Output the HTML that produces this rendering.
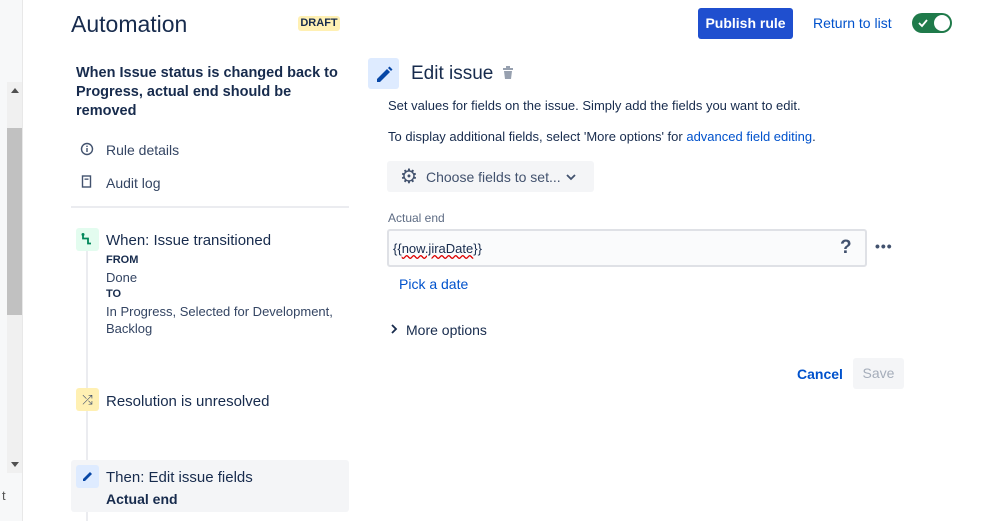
<!DOCTYPE html>
<html><head><meta charset="utf-8"><style>
*{margin:0;padding:0;box-sizing:border-box}
body{width:999px;height:521px;overflow:hidden;background:#fff;font-family:"Liberation Sans",sans-serif;color:#172b4d;position:relative}
.a{position:absolute;white-space:nowrap}
</style></head><body>
<div class="a" style="left:0;top:0;width:23px;height:521px;background:#f7f8f9;border-right:1px solid #e8e8e8"></div>
<div class="a" style="left:7px;top:82px;width:15px;height:391px;background:#f0f0f0"></div>
<div class="a" style="left:7px;top:128px;width:15px;height:187px;background:#c1c1c1"></div>
<div class="a" style="left:11px;top:88px;width:0;height:0;border-left:4px solid transparent;border-right:4px solid transparent;border-bottom:5px solid #505050"></div>
<div class="a" style="left:11px;top:462px;width:0;height:0;border-left:4px solid transparent;border-right:4px solid transparent;border-top:5px solid #505050"></div>
<div class="a" style="left:2px;top:488px;font-size:13px;color:#555">t</div>

<div class="a" style="left:71px;top:11px;font-size:23px;color:#172b4d">Automation</div>
<div class="a" style="left:298px;top:16px;width:42px;height:15px;background:#fff0b3;border-radius:3px;font-size:11px;font-weight:bold;text-align:center;line-height:15px;color:#172b4d">DRAFT</div>
<div class="a" style="left:76px;top:64px;font-size:14.5px;font-weight:bold;line-height:19px">When Issue status is changed back to<br>Progress, actual end should be<br>removed</div>
<svg class="a" style="left:80px;top:142px" width="14" height="14"><circle cx="7" cy="7" r="5.5" fill="none" stroke="#42526e" stroke-width="1.4"/><rect x="6.3" y="6" width="1.4" height="4" fill="#42526e"/><rect x="6.3" y="3.6" width="1.4" height="1.4" fill="#42526e"/></svg>
<div class="a" style="left:106px;top:142px;font-size:14px;color:#344563">Rule details</div>
<svg class="a" style="left:81px;top:175px" width="12" height="14"><rect x="1.5" y="1" width="8" height="11" fill="none" stroke="#42526e" stroke-width="1.4"/><rect x="3.5" y="3.5" width="4" height="1.3" fill="#42526e"/></svg>
<div class="a" style="left:106px;top:175px;font-size:14px;color:#344563">Audit log</div>
<div class="a" style="left:71px;top:206px;width:278px;height:2px;background:#ebecf0"></div>
<div class="a" style="left:86px;top:248px;width:2px;height:273px;background:#ebecf0"></div>
<div class="a" style="left:76px;top:228px;width:23px;height:23px;background:#e3fcef;border-radius:3px"></div>
<svg class="a" style="left:80px;top:232px" width="14" height="14"><path d="M3 2v4.5h5v5h3" fill="none" stroke="#00875a" stroke-width="1.8"/><circle cx="3" cy="2.5" r="1.5" fill="#00875a"/></svg>
<div class="a" style="left:106px;top:232px;font-size:15px">When: Issue transitioned</div>
<div class="a" style="left:106px;top:254px;font-size:11px;font-weight:bold">FROM</div>
<div class="a" style="left:106px;top:270px;font-size:13px;color:#344563">Done</div>
<div class="a" style="left:106px;top:288px;font-size:11px;font-weight:bold">TO</div>
<div class="a" style="left:106px;top:303px;font-size:13px;color:#344563;line-height:17px;white-space:normal;width:240px">In Progress, Selected for Development, Backlog</div>
<div class="a" style="left:76px;top:388px;width:23px;height:23px;background:#fff0b3;border-radius:3px;text-align:center;font-size:13px;line-height:23px;color:#42526e">⤮</div>
<div class="a" style="left:106px;top:393px;font-size:15px">Resolution is unresolved</div>
<div class="a" style="left:71px;top:460px;width:278px;height:52px;background:#f4f5f7;border-radius:3px"></div>
<div class="a" style="left:76px;top:465px;width:23px;height:23px;background:#deebff;border-radius:3px"></div>
<svg class="a" style="left:80px;top:469px" width="14" height="14"><path d="M3 10l7-7 2 2-7 7H3z" fill="#0747a6"/></svg>
<div class="a" style="left:106px;top:469px;font-size:15px">Then: Edit issue fields</div>
<div class="a" style="left:106px;top:491px;font-size:14px;font-weight:bold">Actual end</div>

<div class="a" style="left:698px;top:8px;width:95px;height:31px;background:#1f4fcf;border-radius:3px;color:#fff;font-size:14px;font-weight:bold;text-align:center;line-height:31px">Publish rule</div>
<div class="a" style="left:813px;top:15px;font-size:14px;color:#0052cc">Return to list</div>
<div class="a" style="left:912px;top:13px;width:40px;height:20px;background:#1f7a4a;border-radius:10px"></div>
<div class="a" style="left:934px;top:15px;width:16px;height:16px;background:#fff;border-radius:50%"></div>
<svg class="a" style="left:917px;top:17px" width="12" height="12"><path d="M2 6l3 3 5-6" fill="none" stroke="#fff" stroke-width="1.8"/></svg>

<div class="a" style="left:368px;top:58px;width:31px;height:31px;background:#deebff;border-radius:3px"></div>
<svg class="a" style="left:374px;top:64px" width="20" height="20"><path d="M3 15l10-10 3 3-10 10H3z" fill="#0747a6"/><path d="M14 4l1.5-1.5 3 3L17 7z" fill="#0747a6"/></svg>
<div class="a" style="left:411px;top:63px;font-size:19px">Edit issue</div>
<svg class="a" style="left:502px;top:66px" width="12" height="14"><rect x="1" y="2" width="10" height="2" fill="#97a0af"/><rect x="4" y="0" width="4" height="2" fill="#97a0af"/><path d="M2 5h8l-1 8H3z" fill="#97a0af"/></svg>
<div class="a" style="left:388px;top:98px;font-size:13px;color:#172b4d">Set values for fields on the issue. Simply add the fields you want to edit.</div>
<div class="a" style="left:388px;top:129px;font-size:13px;color:#172b4d">To display additional fields, select 'More options' for <span style="color:#0052cc">advanced field editing</span>.</div>
<div class="a" style="left:387px;top:161px;width:207px;height:31px;background:#f4f5f7;border-radius:3px"></div>
<div class="a" style="left:400px;top:164px;font-size:20px;color:#42526e">⚙</div>
<div class="a" style="left:426px;top:169px;font-size:14px;color:#42526e">Choose fields to set...</div>
<svg class="a" style="left:566px;top:173px" width="10" height="8"><path d="M1 2l4 4 4-4" fill="none" stroke="#42526e" stroke-width="1.8"/></svg>
<div class="a" style="left:388px;top:211px;font-size:12px;color:#5e6c84">Actual end</div>
<div class="a" style="left:387px;top:229px;width:480px;height:38px;border:2px solid #dfe1e6;border-radius:3px;background:#fafbfc"></div>
<div class="a" style="left:393px;top:241px;font-size:13px;color:#172b4d">{{<span style="text-decoration:underline wavy #d00">now.jiraDate</span>}}</div>
<div class="a" style="left:840px;top:237px;font-size:19px;font-weight:bold;color:#42526e">?</div>
<div class="a" style="left:875px;top:238px;font-size:14px;font-weight:bold;color:#42526e;letter-spacing:1px">•••</div>
<div class="a" style="left:399px;top:276px;font-size:14px;color:#0052cc">Pick a date</div>
<svg class="a" style="left:390px;top:324px" width="8" height="10"><path d="M2 1l4 4-4 4" fill="none" stroke="#172b4d" stroke-width="1.8"/></svg>
<div class="a" style="left:406px;top:322px;font-size:14px;color:#172b4d">More options</div>
<div class="a" style="left:797px;top:366px;font-size:14px;font-weight:bold;color:#0052cc">Cancel</div>
<div class="a" style="left:853px;top:358px;width:51px;height:31px;background:#f4f5f7;border-radius:3px;color:#a5adba;font-size:14px;text-align:center;line-height:31px">Save</div>
</body></html>
